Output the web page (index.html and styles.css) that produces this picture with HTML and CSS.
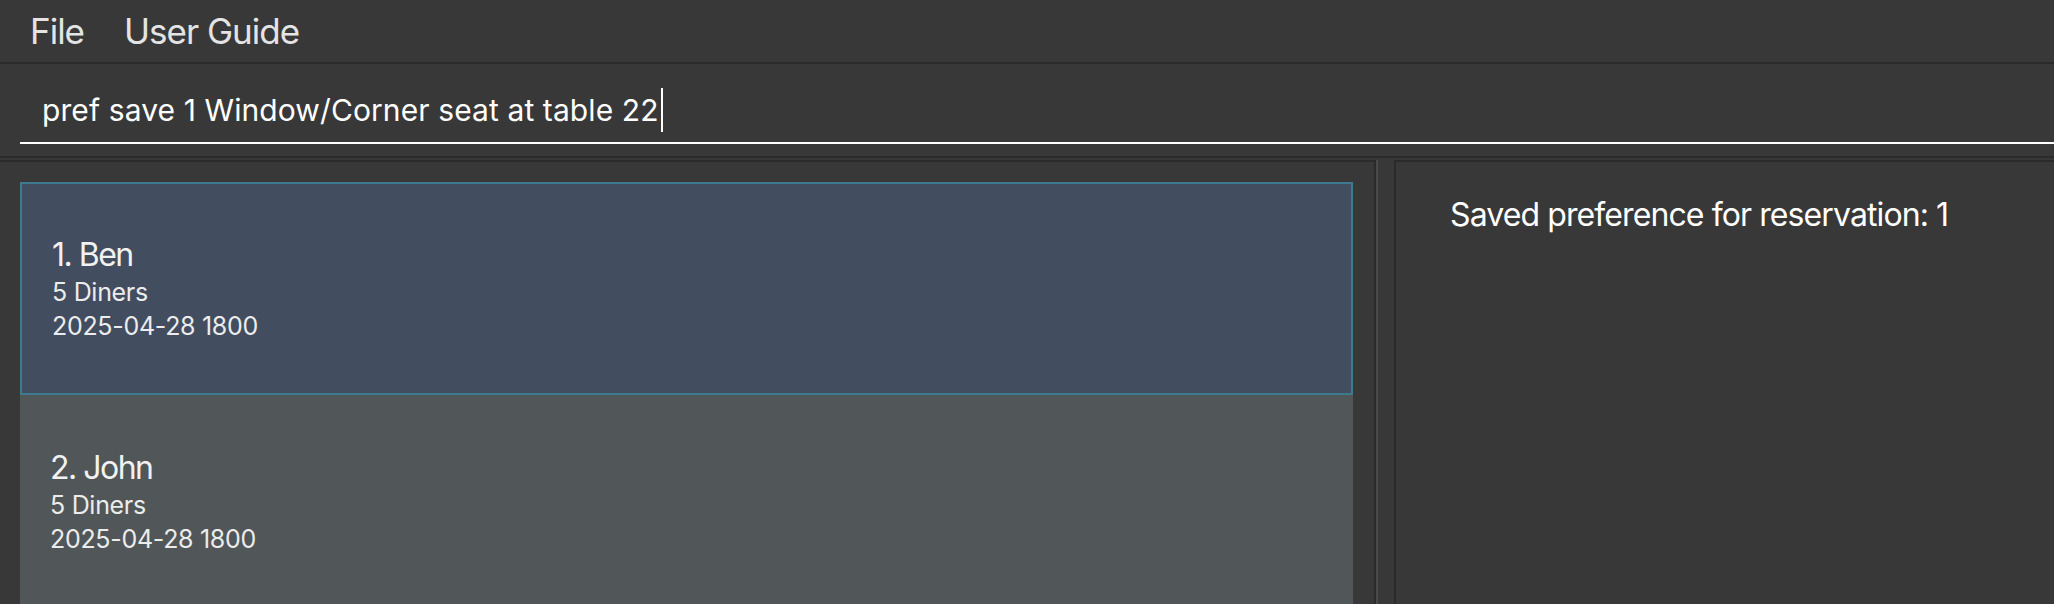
FILE: index.html
```html
<!DOCTYPE html>
<html>
<head>
<meta charset="utf-8">
<link rel="stylesheet" href="styles.css">
</head>
<body>
<div class="app">
  <div class="menubar">
    <span class="menu-item">File</span>
    <span class="menu-item">User Guide</span>
  </div>
  <div class="command-area">
    <div class="command-box">
      <span class="command-text">pref save 1 Window/Corner seat at table 22</span><span class="caret"></span>
    </div>
  </div>
  <div class="main">
    <div class="left-pane">
      <div class="list">
        <div class="card selected">
          <div class="name">1. Ben</div>
          <div class="small">5 Diners</div>
          <div class="small">2025-04-28 1800</div>
        </div>
        <div class="card odd">
          <div class="name">2. John</div>
          <div class="small">5 Diners</div>
          <div class="small">2025-04-28 1800</div>
        </div>
      </div>
    </div>
    <div class="divider"></div>
    <div class="right-pane">
      <div class="result">Saved preference for reservation: 1</div>
    </div>
  </div>
</div>
</body>
</html>
```
FILE: styles.css
```css
html, body {
  margin: 0;
  padding: 0;
  background: #383838;
  overflow: hidden;
}
.app {
  width: 2054px;
  height: 604px;
  display: flex;
  flex-direction: column;
  font-family: Inter, "Noto Sans", sans-serif;
  color: #ffffff;
}
.menubar {
  height: 62px;
  border-bottom: 2px solid #2a2a2a;
  display: flex;
  align-items: center;
  gap: 40px;
  padding-left: 30px;
  box-sizing: content-box;
}
.menu-item {
  font-size: 35px;
  line-height: 62px;
  letter-spacing: -1px;
  color: #e4e4e4;
}
.command-area {
  border-bottom: 2px solid #2a2a2a;
  padding-left: 20px;
  box-sizing: border-box;
  height: 94px;
}
.command-box {
  height: 80px;
  border-bottom: 2px solid #ffffff;
  box-sizing: border-box;
  padding-left: 22px;
  padding-top: 26px;
  display: flex;
  align-items: flex-start;
}
.command-text {
  font-size: 30px;
  line-height: 40px;
  letter-spacing: 0.1px;
  color: #ffffff;
}
.caret {
  width: 2px;
  height: 44px;
  margin-top: -2px;
  margin-left: 2px;
  background: #ffffff;
}
.main {
  flex: 1;
  display: flex;
  margin-top: 2px;
  min-height: 0;
}
.left-pane {
  width: 1376px;
  box-sizing: border-box;
  border-top: 2px solid #2a2a2a;
  border-right: 2px solid #2a2a2a;
  padding: 20px 21px 0 20px;
  overflow: hidden;
}
.divider {
  width: 2px;
  background: #4a4a4a;
}
.right-pane {
  flex: 1;
  margin-left: 16px;
  border-top: 2px solid #2a2a2a;
  border-left: 2px solid #2a2a2a;
  padding: 33px 0 0 54px;
}
.list {
  display: flex;
  flex-direction: column;
}
.card {
  height: 213px;
  box-sizing: border-box;
  border: 2px solid transparent;
  padding: 51px 0 0 30px;
  display: flex;
  flex-direction: column;
  flex-shrink: 0;
}
.card.selected {
  background: #424d5f;
  border-color: #3e7b91;
}
.card.odd {
  background: #515658;
  border-color: #515658;
  padding-left: 28px;
}
.name {
  font-size: 32px;
  line-height: 40px;
  letter-spacing: -1.5px;
  color: #f2f2f2;
}
.small {
  font-size: 25px;
  line-height: 34px;
  letter-spacing: -0.3px;
  color: #ececec;
}
.result {
  font-size: 32px;
  line-height: 40px;
  letter-spacing: -0.9px;
  color: #ffffff;
}
```
